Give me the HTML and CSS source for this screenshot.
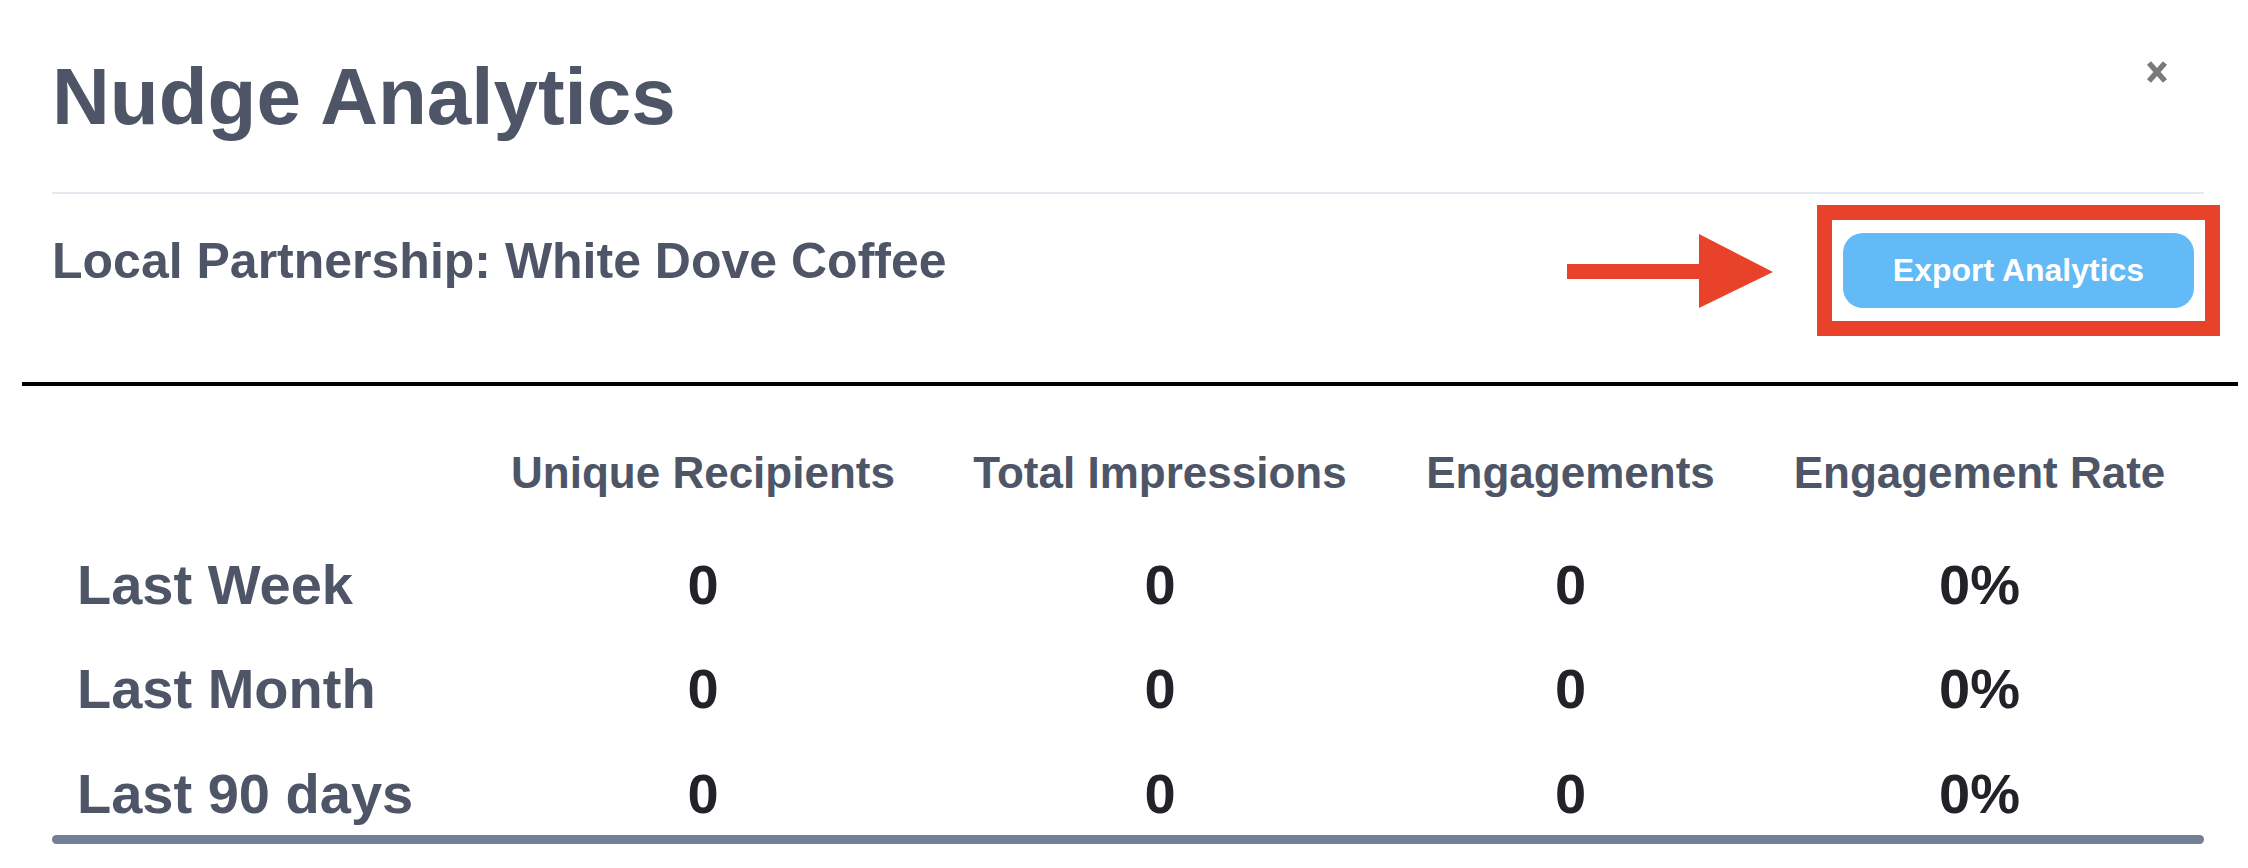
FILE: index.html
```html
<!DOCTYPE html>
<html>
<head>
  <meta charset="UTF-8">
  <title>Nudge Analytics</title>
  <link rel="stylesheet" href="styles.css">
</head>
<body>
  <div class="modal">
    <div class="modal-head">
      <div class="title-row">
        <h1>Nudge Analytics</h1>
        <button class="close-button" aria-label="Close">
          <svg width="22" height="24" viewBox="0 0 22 24">
            <path d="M3 3 L19 21 M19 3 L3 21" stroke="#7a7a7a" stroke-width="5.5" fill="none"/>
          </svg>
        </button>
      </div>
      <hr class="divider">
      <div class="partner-row">
        <h2>Local Partnership: White Dove Coffee</h2>
        <div class="export-group">
          <svg class="callout-arrow" width="206" height="74" viewBox="0 0 206 74">
            <rect x="0" y="30" width="133" height="15" fill="#e8432a"/>
            <polygon points="132,0 206,38 132,74" fill="#e8432a"/>
          </svg>
          <div class="callout-box">
            <button class="export-button">Export Analytics</button>
          </div>
        </div>
      </div>
    </div>
    <div class="modal-body">
      <div class="stats">
        <div class="stats-head"></div>
        <div class="stats-head">Unique Recipients</div>
        <div class="stats-head">Total Impressions</div>
        <div class="stats-head">Engagements</div>
        <div class="stats-head">Engagement Rate</div>

        <div class="stats-label">Last Week</div>
        <div class="stats-value">0</div>
        <div class="stats-value">0</div>
        <div class="stats-value">0</div>
        <div class="stats-value">0%</div>

        <div class="stats-label">Last Month</div>
        <div class="stats-value">0</div>
        <div class="stats-value">0</div>
        <div class="stats-value">0</div>
        <div class="stats-value">0%</div>

        <div class="stats-label">Last 90 days</div>
        <div class="stats-value">0</div>
        <div class="stats-value">0</div>
        <div class="stats-value">0</div>
        <div class="stats-value">0%</div>
      </div>
      <div class="scroll-bar"></div>
    </div>
  </div>
</body>
</html>
```

FILE: styles.css
```css
body {
  font-family: 'Liberation Sans', Arial, Helvetica, sans-serif;
  margin: 0;
  background-color: #fff;
  color: #4e5567;
}

.modal {
  margin: 0 10px 0 22px;
}

.modal-head {
  padding: 57px 34px 46px 30px;
  border-bottom: 4px solid #000;
}

.title-row {
  display: flex;
  justify-content: space-between;
  align-items: flex-start;
}

h1 {
  font-size: 80px;
  line-height: 79px;
  font-weight: 700;
  margin: 0;
}

.close-button {
  background: none;
  border: none;
  padding: 0;
  margin: 3px 36px 0 0;
  cursor: pointer;
  display: block;
}

.close-button svg {
  display: block;
}

.divider {
  border: none;
  border-top: 2px solid #e2e8f0;
  margin: 56px 0 0;
}

.partner-row {
  display: flex;
  align-items: flex-start;
}

h2 {
  font-size: 50px;
  line-height: 60px;
  font-weight: 700;
  margin: 37px 0 0;
}

.export-group {
  margin: 11px -16px 0 auto;
  display: flex;
  align-items: center;
  gap: 44px;
}

.callout-arrow {
  display: block;
}

/* red highlight frame round the button */
.callout-box {
  border: 15px solid #e8432a;
  padding: 13px 11px;
}

.export-button {
  display: block;
  width: 351px;
  height: 75px;
  line-height: 75px;
  padding: 0;
  border: none;
  border-radius: 20px;
  background: #62baf6;
  color: #fff;
  font-family: inherit;
  font-size: 32px;
  font-weight: 700;
  text-align: center;
  cursor: pointer;
}

.modal-body {
  padding: 61px 34px 0 30px;
}

.stats {
  display: grid;
  grid-template-columns: 1fr 462px 452px 369px 449px;
}

.stats-head {
  font-size: 44px;
  line-height: 52px;
  font-weight: 700;
  text-align: center;
  padding-bottom: 14px;
  white-space: nowrap;
}

.stats-label,
.stats-value {
  font-size: 56px;
  line-height: 66px;
  font-weight: 700;
  padding-top: 38.5px;
}

.stats-label {
  padding-left: 25px;
}

.stats-value {
  text-align: center;
  color: #212328;
}

.scroll-bar {
  margin-top: 8.5px;
  height: 9px;
  border-radius: 5px;
  background: #718096;
}
```
